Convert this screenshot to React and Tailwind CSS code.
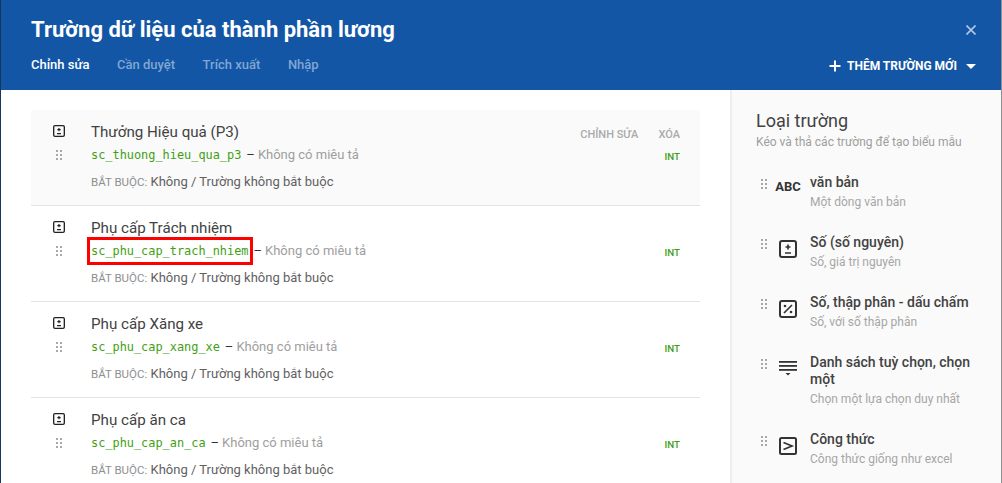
import React from "react";

const Grip = ({ className = "" }) => (
  <svg width="7" height="10" viewBox="0 0 7 10" className={className} fill="#a8a8a8">
    <rect x="0" y="0" width="2" height="2" /><rect x="4" y="0" width="2" height="2" />
    <rect x="0" y="4" width="2" height="2" /><rect x="4" y="4" width="2" height="2" />
    <rect x="0" y="8" width="2" height="2" /><rect x="4" y="8" width="2" height="2" />
  </svg>
);

const NumIcon = ({ size = 12, color = "#222" }) => (
  <svg width={size} height={size} viewBox="0 0 18 18" fill="none">
    <rect x="1" y="1" width="16" height="16" rx="2" stroke={color} strokeWidth="2" />
    <path d="M9 4.5v5M6.5 7h5M6 13h6" stroke={color} strokeWidth="1.7" />
  </svg>
);

const DecimalIcon = () => (
  <svg width="18" height="18" viewBox="0 0 18 18" fill="none">
    <rect x="1" y="1" width="16" height="16" rx="2" stroke="#333" strokeWidth="2" />
    <path d="M13 5 5 13" stroke="#333" strokeWidth="1.7" />
    <circle cx="6" cy="6" r="1.3" fill="#333" /><circle cx="12" cy="12" r="1.3" fill="#333" />
  </svg>
);

const ListIcon = () => (
  <svg width="18" height="18" viewBox="0 0 18 18" fill="#333">
    <rect x="0" y="1" width="18" height="1.8" /><rect x="0" y="5" width="18" height="1.8" /><rect x="0" y="9" width="18" height="1.8" />
    <path d="M6.5 13h5L9 15.5z" />
  </svg>
);

const FormulaIcon = () => (
  <svg width="18" height="18" viewBox="0 0 18 18" fill="none">
    <rect x="1" y="1" width="16" height="16" rx="1.5" stroke="#333" strokeWidth="2" />
    <path d="M4.5 5.5 13 9l-8.5 3.5" stroke="#333" strokeWidth="1.7" />
  </svg>
);

const fields = [
  { name: "Thưởng Hiệu quả (P3)", code: "sc_thuong_hieu_qua_p3", active: true },
  { name: "Phụ cấp Trách nhiệm", code: "sc_phu_cap_trach_nhiem", boxed: true },
  { name: "Phụ cấp Xăng xe", code: "sc_phu_cap_xang_xe" },
  { name: "Phụ cấp ăn ca", code: "sc_phu_cap_an_ca" },
];

const types = [
  { icon: <span className="text-[13px] font-bold leading-none text-[#333]">ABC</span>, title: "văn bản", sub: "Một dòng văn bản" },
  { icon: <NumIcon size={18} color="#333" />, title: "Số (số nguyên)", sub: "Số, giá trị nguyên" },
  { icon: <DecimalIcon />, title: "Số, thập phân - dấu chấm", sub: "Số, với số thập phân" },
  { icon: <ListIcon />, title: "Danh sách tuỳ chọn, chọn một", sub: "Chọn một lựa chọn duy nhất" },
  { icon: <FormulaIcon />, title: "Công thức", sub: "Công thức giống như excel" },
];

function FieldRow({ f }) {
  return (
    <div className={`flex h-[96px] shrink-0 border-b border-[#e4e4e4] ${f.active ? "bg-[#fafafa]" : "bg-white"}`}>
      <div className="flex w-[56px] shrink-0 flex-col items-center pt-[15px]">
        <NumIcon />
        <Grip className="mt-[13px]" />
      </div>
      <div className="min-w-0 flex-1 pl-[4px] pt-[12px]">
        <div className="text-[15.15px] leading-[20px] text-[#424242]">{f.name}</div>
        <div className="mt-[3px] flex h-[20px] items-center text-[13px] text-[#9e9e9e]">
          <span className={`font-['DejaVu_Sans_Mono',monospace] text-[11.9px] leading-[20px] text-[#3fa014] ${f.boxed ? "outline-[3px] outline-offset-[1px] outline-[#ff0000]" : ""}`}>{f.code}</span>
          <span className="ml-[5px] text-[#333]">–</span>
          <span className="ml-[3px]">Không có miêu tả</span>
        </div>
        <div className="mt-[8px] text-[13px] leading-[18px] text-[#616161]">
          <span className="text-[11.5px] text-[#8f8f8f]">BẮT BUỘC:</span> Không / Trường không bắt buộc
        </div>
      </div>
      <div className="flex w-[120px] shrink-0 flex-col items-end pr-[20px] pt-[18px]">
        <div className={`flex h-[14px] gap-[20px] text-[11px] font-medium leading-[14px] text-[#aaaaaa] ${f.active ? "" : "invisible"}`}>
          <span>CHỈNH SỬA</span>
          <span>XÓA</span>
        </div>
        <span className="mt-[9px] text-[9.75px] font-medium leading-[12px] text-[#3fa014]">INT</span>
      </div>
    </div>
  );
}

function TypeRow({ t }) {
  return (
    <div className="mb-[24px] flex">
      <Grip className="ml-[5px] mt-[5px] shrink-0" />
      <div className="flex w-[38px] shrink-0 justify-center pl-[2px] pt-[6px]">{t.icon}</div>
      <div className="min-w-0 flex-1 pl-[4px] pr-[22px]">
        <div className="text-[14px] font-medium leading-[17px] text-[#424242]">{t.title}</div>
        <div className="mt-[3px] text-[12px] leading-[16px] text-[#a6a6a6]">{t.sub}</div>
      </div>
    </div>
  );
}

export default function App() {
  return (
    <div className="flex h-[483px] w-[1002px] flex-col overflow-hidden border-x border-l-[#16365c] border-r-[#8f8f8f] bg-white font-['Roboto',sans-serif]">
      <header className="flex h-[90px] shrink-0 bg-[#1356a5] pl-[30px] pr-[25px] text-white">
        <div className="flex-1 pt-[16px]">
          <h1 className="text-[22px] font-bold leading-[28px]">Trường dữ liệu của thành phần lương</h1>
          <nav className="mt-[12px] flex gap-[27.5px] text-[13px] font-medium leading-[18px] text-[#80a6d3]">
            <span className="text-white">Chỉnh sửa</span>
            <span>Cần duyệt</span>
            <span>Trích xuất</span>
            <span>Nhập</span>
          </nav>
        </div>
        <div className="flex flex-col items-end">
          <svg width="10" height="10" viewBox="0 0 10 10" className="mt-[25px]" stroke="#b4c8e2" strokeWidth="1.6">
            <path d="M0.5 0.5 9.5 9.5M9.5 0.5 0.5 9.5" />
          </svg>
          <div className="mt-[24px] flex items-center">
            <svg width="12" height="12" viewBox="0 0 12 12" fill="white">
              <rect x="0.5" y="5" width="11" height="2" /><rect x="5" y="0.5" width="2" height="11" />
            </svg>
            <span className="ml-[6px] text-[12px] font-bold leading-[14px]">THÊM TRƯỜNG MỚI</span>
            <svg width="10" height="5" viewBox="0 0 10 5" fill="white" className="ml-[9px]">
              <path d="M0 0h10L5 5z" />
            </svg>
          </div>
        </div>
      </header>
      <main className="flex min-h-0 flex-1">
        <section className="flex w-[729px] shrink-0 flex-col overflow-hidden pl-[30px] pr-[30px] pt-[20px]">
          {fields.map((f) => <FieldRow key={f.code} f={f} />)}
        </section>
        <aside className="flex-1 overflow-hidden border-l-2 border-[#eeeeee] bg-[#fafafa] pl-[24px] pt-[19px]">
          <h2 className="text-[18px] leading-[24px] text-[#424242]">Loại trường</h2>
          <p className="mb-[24px] mt-[1px] text-[12px] leading-[16px] text-[#9e9e9e]">Kéo và thả các trường để tạo biểu mẫu</p>
          {types.map((t) => <TypeRow key={t.title} t={t} />)}
        </aside>
      </main>
    </div>
  );
}
